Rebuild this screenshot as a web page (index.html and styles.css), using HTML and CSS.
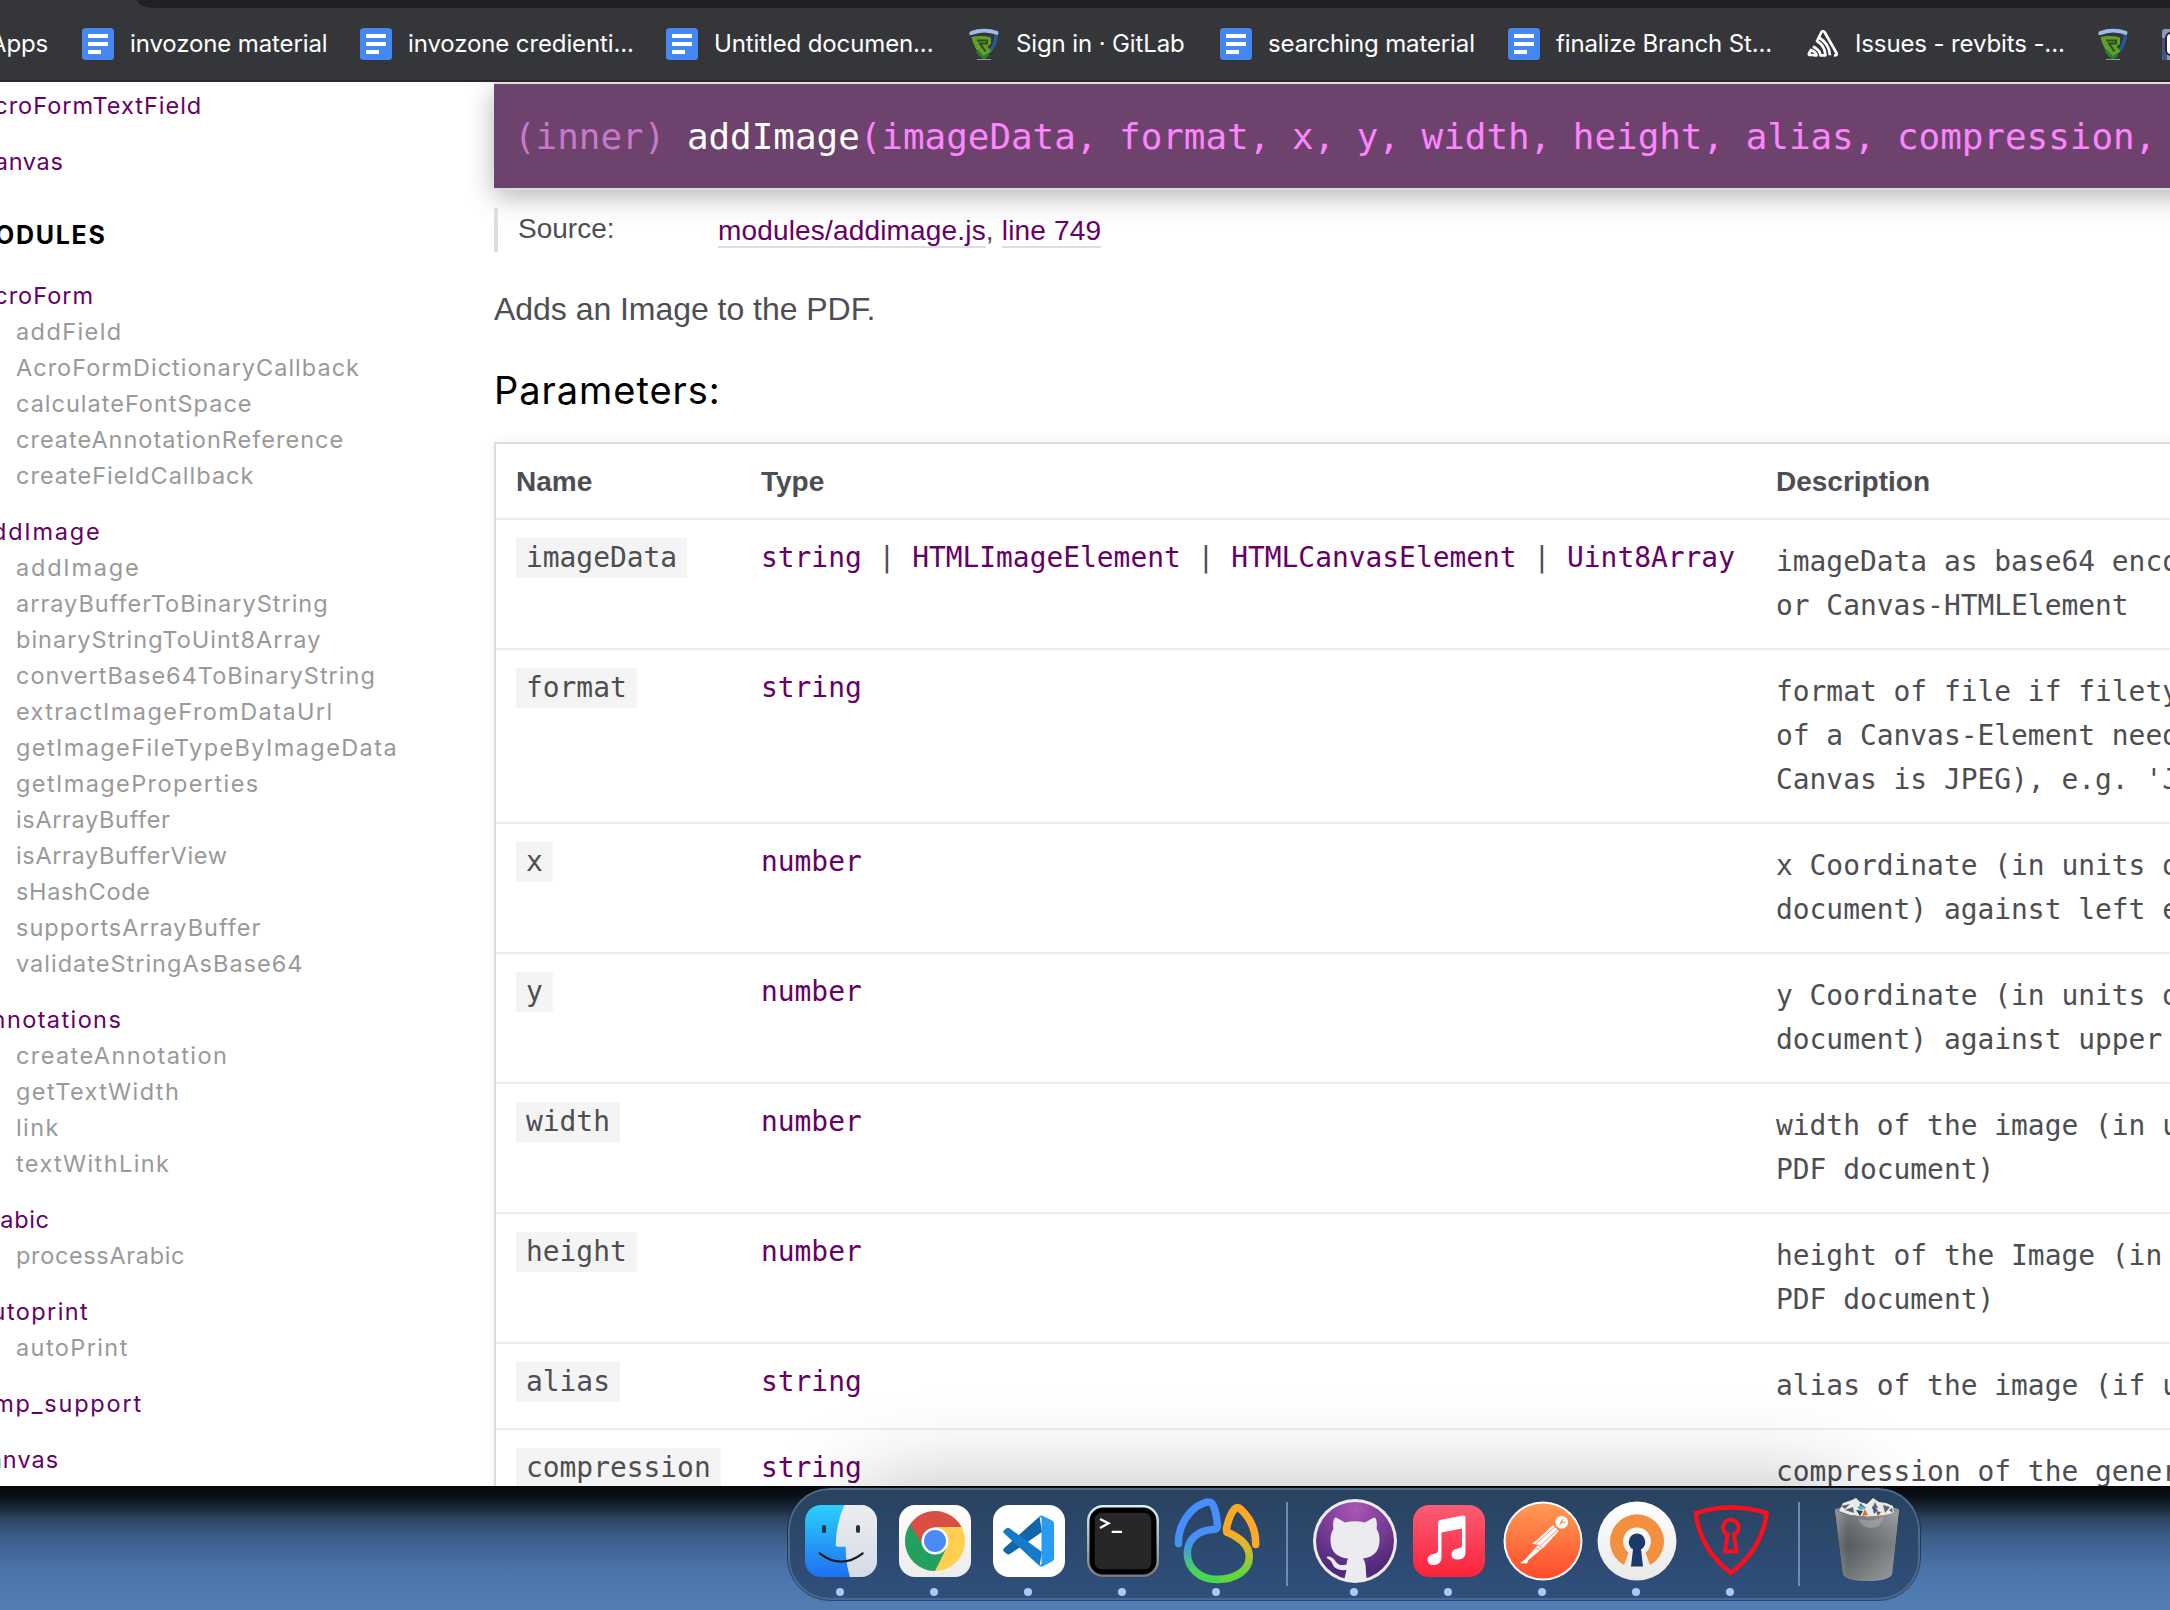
FILE: index.html
```html
<!DOCTYPE html>
<html lang="en">
<head>
<meta charset="utf-8">
<title>jsPDF - addImage</title>
<link rel="stylesheet" href="styles.css">
</head>
<body>
<svg class="defs" width="0" height="0" aria-hidden="true">
  <defs>
    <symbol id="doc" viewBox="0 0 32 32"><rect width="32" height="32" rx="3.5" fill="#4688f1"/><path d="M6 6h20v4H6zM6 14h20v4H6zM6 22h13v4H6z" fill="#fff"/></symbol>
    <symbol id="rev" viewBox="0 0 32 32"><path d="M1.5 3.500Q16-1.500 30.500 3.500Q30 20 19 28L16 30Q3 22 1.500 3.500z" fill="#33363b"/><path d="M28.500 5Q28 18 20.500 24" fill="none" stroke="#265a9a" stroke-width="3.500"/><path d="M1.500 7Q1 4 2.500 3.200Q16-1.500 30 3.200Q31 5 29.500 7Q16 2 3.500 7z" fill="#9dbce8"/><path d="M3.500 9Q14 7 23 9.500V16L19.500 18.500L23.500 23L16 30Q6 22 3.500 9z" fill="#62a024"/><path d="M9 12.500H19V15.500H12L17.500 23.500" fill="none" stroke="#2d4a22" stroke-width="2"/><path d="M9 23Q12 27 16 30L20 26.500" fill="none" stroke="#2c7a35" stroke-width="3"/><path d="M9 31.500h14" stroke="#9a9a9a" stroke-width="1"/></symbol>
  </defs>
</svg>

<div class="window">
  <div class="toolbar"></div>
  <nav class="bookmarks">
    <span class="apps">Apps</span>
    <a><svg><use href="#doc"/></svg><span>invozone material</span></a>
    <a><svg><use href="#doc"/></svg><span>invozone credienti...</span></a>
    <a><svg><use href="#doc"/></svg><span>Untitled documen...</span></a>
    <a><svg><use href="#rev"/></svg><span>Sign in · GitLab</span></a>
    <a><svg><use href="#doc"/></svg><span>searching material</span></a>
    <a><svg><use href="#doc"/></svg><span>finalize Branch St...</span></a>
    <a><svg viewBox="0 0 32 32"><g fill="none" stroke="#fff" stroke-width="2.700" stroke-linejoin="round"><path d="M6.500 27H2.500Q1.500 26.500 2 25.500L4 22Q9 24 9.500 27.300H6.500M6 18.500Q13 22 13.500 27.300H18.500Q18 18 10 13L14.500 4Q16 2 17.500 4L29.500 25Q30.500 27 28.500 27.300H27M12 9.500Q22.500 16 23 27.300"/></g></svg><span>Issues - revbits -...</span></a>
    <a><svg><use href="#rev"/></svg></a>
    <a><svg viewBox="0 0 32 32"><rect x="1" y="1" width="31" height="31" rx="3" fill="#8e99b5"/><path d="M1 10h5v22H4Q1 31 1 28z" fill="#3f5488"/><rect x="5" y="5" width="30" height="22" rx="5" fill="#fff" stroke="#26262c" stroke-width="2"/></svg></a>
  </nav>

  <div class="page">
    <aside class="sidebar">
      <h4>AcroFormTextField</h4>
      <h4 class="tight">Canvas</h4>
      <h3>MODULES</h3>
      <h4>AcroForm</h4>
      <ul>
        <li class="wide">addField</li>
        <li>AcroFormDictionaryCallback</li>
        <li>calculateFontSpace</li>
        <li>createAnnotationReference</li>
        <li>createFieldCallback</li>
      </ul>
      <h4 class="wider">addImage</h4>
      <ul>
        <li class="wider">addImage</li>
        <li>arrayBufferToBinaryString</li>
        <li>binaryStringToUint8Array</li>
        <li>convertBase64ToBinaryString</li>
        <li class="wide">extractImageFromDataUrl</li>
        <li class="wide">getImageFileTypeByImageData</li>
        <li class="wide">getImageProperties</li>
        <li class="tight">isArrayBuffer</li>
        <li class="tight">isArrayBufferView</li>
        <li class="tight">sHashCode</li>
        <li>supportsArrayBuffer</li>
        <li>validateStringAsBase64</li>
      </ul>
      <h4 class="wide">annotations</h4>
      <ul>
        <li class="wide">createAnnotation</li>
        <li class="wide">getTextWidth</li>
        <li class="wide">link</li>
        <li class="wide">textWithLink</li>
      </ul>
      <h4 class="tight">arabic</h4>
      <ul><li class="tight">processArabic</li></ul>
      <h4 class="wide">autoprint</h4>
      <ul><li class="wide">autoPrint</li></ul>
      <h4 class="wider">bmp_support</h4>
      <h4>canvas</h4>
    </aside>

    <main class="content">
      <h2 class="signature"><span class="attr">(inner)</span> <b>addImage</b>(imageData, format, x, y, width, height, alias, compression, rotation)</h2>
      <dl class="details">
        <dt>Source:</dt>
        <dd><a>modules/addimage.js</a>, <a>line 749</a></dd>
      </dl>
      <p class="summary">Adds an Image to the PDF.</p>
      <h5>Parameters:</h5>
      <div class="params">
        <div class="row head"><div>Name</div><div>Type</div><div>Description</div></div>
        <div class="row"><div><code>imageData</code></div><div class="type"><a>string</a> | <a>HTMLImageElement</a> | <a>HTMLCanvasElement</a> | <a>Uint8Array</a></div><div class="desc">imageData as base64 encoded DataUrl<br>or Canvas-HTMLElement</div></div>
        <div class="row"><div><code>format</code></div><div class="type"><a>string</a></div><div class="desc">format of file if filetype-recognition<br>of a Canvas-Element needs to be set<br>Canvas is JPEG), e.g. 'JPEG', 'PNG'</div></div>
        <div class="row"><div><code>x</code></div><div class="type"><a>number</a></div><div class="desc">x Coordinate (in units declared<br>document) against left edge</div></div>
        <div class="row"><div><code>y</code></div><div class="type"><a>number</a></div><div class="desc">y Coordinate (in units declared<br>document) against upper edge</div></div>
        <div class="row"><div><code>width</code></div><div class="type"><a>number</a></div><div class="desc">width of the image (in units<br>PDF document)</div></div>
        <div class="row"><div><code>height</code></div><div class="type"><a>number</a></div><div class="desc">height of the Image (in units<br>PDF document)</div></div>
        <div class="row"><div><code>alias</code></div><div class="type"><a>string</a></div><div class="desc">alias of the image (if used</div></div>
        <div class="row"><div><code>compression</code></div><div class="type"><a>string</a></div><div class="desc">compression of the generated</div></div>
      </div>
    </main>
    <div class="dock-shadow"></div>
  </div>
</div>

<div class="desktop">
  <div class="dock">
    <div class="app"><svg viewBox="0 0 88 88">
      <defs><linearGradient id="fa" x2="0" y2="1"><stop stop-color="#2cd0fb"/><stop offset="1" stop-color="#1f6ff0"/></linearGradient><linearGradient id="fb" x2="0" y2="1"><stop stop-color="#ededf0"/><stop offset="1" stop-color="#d3dbe6"/></linearGradient><clipPath id="sq"><rect x="8" y="8" width="72" height="72" rx="16"/></clipPath></defs>
      <g clip-path="url(#sq)"><path d="M8 8h72v72H8z" fill="url(#fa)"/><path d="M47.500 8Q39 26 38.700 48Q38.700 49.700 40.500 49.700H48.700Q48.500 66 53 80H80V8z" fill="url(#fb)"/></g>
      <path d="M27 30v4M61 30v4" stroke="#26313d" stroke-width="4" stroke-linecap="round"/><path d="M22.700 56.300Q44 73 65.700 56.300" fill="none" stroke="#171b20" stroke-width="2.200" stroke-linecap="round"/></svg><i></i></div>
    <div class="app"><svg viewBox="0 0 88 88">
      <defs><linearGradient id="ch" x2="0" y2="1"><stop stop-color="#fff"/><stop offset="1" stop-color="#ececec"/></linearGradient></defs>
      <rect x="8" y="8" width="72" height="72" rx="16" fill="url(#ch)"/>
      <circle cx="44" cy="44" r="30" fill="#ffcf4d"/>
      <path d="M44 44L55 52L44 74A30 30 0 0 1 19 27.500z" fill="#239f60"/>
      <path d="M19 27.500A30 30 0 0 1 70.500 30H44L31.500 48z" fill="#da4f45"/>
      <circle cx="44" cy="44" r="13.500" fill="#fff"/><circle cx="44" cy="44" r="11" fill="#4c8bf5"/></svg><i></i></div>
    <div class="app"><svg viewBox="0 0 88 88">
      <rect x="8" y="8" width="72" height="72" rx="16" fill="#fff"/>
      <path d="M54.500 19.500L57 35L25 57Q23 58 21.500 56.800L18.800 54.300Q17.500 52.800 19 51.300z" fill="#0f66ab"/>
      <path d="M19 36.300Q17.500 34.800 18.800 33.500L21.500 31.200Q23 30.200 24.500 31.300L57 55L54.500 69z" fill="#167ac8"/>
      <path d="M54 19.500Q55.500 18 57.500 18.800L67 23.500Q69 24.500 69 26.500V61.500Q69 63.500 67 64.500L57.500 69.500Q55.500 70 54 68.500L56.500 67V21z" fill="#2a9cf0"/></svg><i></i></div>
    <div class="app"><svg viewBox="0 0 88 88">
      <defs><linearGradient id="te" x2="0" y2="1"><stop stop-color="#d9f3fa"/><stop offset="1" stop-color="#77757a"/></linearGradient></defs>
      <rect x="8" y="8" width="72" height="72" rx="16" fill="url(#te)"/><rect x="10.500" y="10.500" width="67" height="67" rx="13.500" fill="#000"/><rect x="15.700" y="15.700" width="56.600" height="56.500" rx="7" fill="#272727"/><path d="M21 22L29.500 26.300L21 31M32.700 34.800H43" stroke="#fff" stroke-width="2.300" fill="none"/></svg><i></i></div>
    <div class="app"><svg viewBox="0 0 88 88">
      <defs><linearGradient id="tp" x1="0" y1="30" x2="0" y2="83" gradientUnits="userSpaceOnUse"><stop stop-color="#478dfb"/><stop offset=".35" stop-color="#4396e6"/><stop offset=".85" stop-color="#48d850"/></linearGradient><linearGradient id="tq" x1="60" y1="30" x2="48" y2="83" gradientUnits="userSpaceOnUse"><stop stop-color="#fda826"/><stop offset=".25" stop-color="#e5b728"/><stop offset=".8" stop-color="#62d63b"/></linearGradient></defs>
      <g fill="none" stroke-width="7.500" stroke-linecap="round" stroke-linejoin="round"><path d="M54 35C67 41 76.300 48 76.300 60C76.300 73 63 82.500 44 82.500" stroke="url(#tq)"/><path d="M5.500 46.500C5 28 17 11 31 6Q38 3 40.500 9Q43.500 16 44.500 29Q44 32.500 40 32.500C25 33 14.300 43 14.300 56C14.300 71 27 82.500 44 82.500" stroke="url(#tp)"/><path d="M54 35Q53 33 54 29Q57 17 61.500 12Q64.500 9 68 12.500C77 21 83 33 82.700 47.500" stroke="#fda826"/></g></svg><i></i></div>
    <span class="sep"></span>
    <div class="app"><svg viewBox="0 0 88 88">
      <defs><radialGradient id="gh" cx=".5" cy=".1" r=".8"><stop stop-color="#ab55b6"/><stop offset="1" stop-color="#50287a"/></radialGradient><clipPath id="gc"><circle cx="44" cy="44" r="41"/></clipPath></defs>
      <circle cx="44" cy="44" r="42" fill="#ececf0"/><circle cx="44" cy="44" r="39" fill="url(#gh)"/>
      <g clip-path="url(#gc)" fill="#ececf0"><path d="M23 22Q24 19.500 26 21L34 25.500Q44 23 54 25.500L62 21Q64 19.500 65 22Q66.500 27 65.500 31.500Q69 37 68.500 44Q68 59.500 52 61.500Q54 64 54.500 68L56 88H32L35.500 73Q24 74 21.500 67Q20 63 16 61Q15 59 18 59.500Q22 60 25 65Q28 69.500 35.500 67.500Q35.500 64 37 61.500Q20 60 19.500 44Q19 37 22.500 31.500Q21.500 27 23 22z"/></g></svg><i></i></div>
    <div class="app"><svg viewBox="0 0 88 88">
      <defs><linearGradient id="mu" x2="0" y2="1"><stop stop-color="#fb5c74"/><stop offset="1" stop-color="#fa233b"/></linearGradient></defs>
      <rect x="8" y="8" width="72" height="72" rx="16" fill="url(#mu)"/>
      <path d="M33 25.500Q33 23.500 35 23L58 18.500Q60.500 18.200 60.500 20.500V56Q60 62 53.500 62.500Q46.500 63 46.500 57.500Q46.500 52.500 53 51.500Q57 51 57 48V31.500L36.500 35.500V61Q36 67.500 29 68Q22.500 68 22.500 62.500Q23 57.500 28.500 57Q33 56.500 33 53z" fill="#fff"/></svg><i></i></div>
    <div class="app"><svg viewBox="0 0 88 88">
      <defs><linearGradient id="po" x2="0" y2="1"><stop stop-color="#ff9b55"/><stop offset="1" stop-color="#ff4b2b"/></linearGradient></defs>
      <circle cx="44" cy="44" r="39.500" fill="#fff"/><circle cx="44" cy="44" r="37.500" fill="url(#po)"/>
      <circle cx="62.700" cy="25.300" r="6.300" fill="#fff"/><path d="M61 27.500L64 22M61 26L66.500 25" stroke="#ff8248" stroke-width="1.200"/>
      <path d="M54 28L60 34L45 50L29.500 63L28 66.500L21 66L26 62.500L39 48L33 46.500L38 43z" fill="#fff"/><path d="M36.500 47L56 30M41 49L59 32.500M38 47L43 51M37 51L42 54" stroke="#ff7443" stroke-width=".8"/></svg><i></i></div>
    <div class="app"><svg viewBox="0 0 88 88">
      <defs><linearGradient id="ov" x2="0" y2="1"><stop stop-color="#fff"/><stop offset="1" stop-color="#e9e9ea"/></linearGradient></defs>
      <circle cx="44" cy="44" r="39.500" fill="url(#ov)"/>
      <path d="M31 68A27 27 0 1 1 57 68L52.500 55.500A14 14 0 1 0 35.500 55.500z" fill="#f3903f"/>
      <path d="M44 36.500A8.500 8.500 0 0 1 48 52.300L50 69.500H38L40 52.300A8.500 8.500 0 0 1 44 36.500z" fill="#1b3a6b"/></svg><i></i></div>
    <div class="app"><svg viewBox="0 0 88 88">
      <g fill="none" stroke="#fb0f1c" stroke-width="4.500"><path d="M8.800 16.200Q44 5 79.600 16.200Q75 52 44 76Q13 52 8.800 16.200z"/><path d="M40.500 37.500A7.700 7.700 0 1 1 47 37.500L49.500 54.500H38z" stroke-width="4"/></g></svg><i></i></div>
    <span class="sep narrow"></span>
    <div class="app"><svg viewBox="0 0 88 88">
      <defs><linearGradient id="tr"><stop stop-color="#85898b"/><stop offset=".2" stop-color="#5f6466"/><stop offset=".6" stop-color="#767a7b"/><stop offset="1" stop-color="#8d9294"/></linearGradient><linearGradient id="ts" x2="0" y2="1"><stop stop-color="#fff" stop-opacity=".18"/><stop offset=".5" stop-color="#222" stop-opacity=".12"/><stop offset="1" stop-color="#fff" stop-opacity=".15"/></linearGradient></defs>
      <path d="M12 12Q44 2 76 12L69 77Q66 84 44 84Q23 84 20 77z" fill="url(#tr)"/>
      <path d="M16 14L20 6L29 3L33 1L37 5L44 7L50 1L56 5L63 6L70 9L71 16L60 19L44 20L27 18z" fill="#e9eaeb"/>
      <path d="M18 9l9-2-5 5zM22 13l8-3 1 6zM37 6l6 5-7 1zM52 5l3 6-6 1zM60 8l7 2-5 6zM66 13l3-2 1 5z" fill="#606468"/><path d="M34 10l6-1 2 3-5 1z" fill="#35c4c0"/><path d="M33 13l7 1-3 5z" fill="#3b3d42"/><path d="M49 9l6 4-4 4z" fill="#3e5da0"/><path d="M42 12l3 6-6 1z" fill="#d4743d"/><path d="M53 14l5 1-3 4z" fill="#a2482c"/>
      <path d="M12 12Q14 18 44 19.500Q74 18 76 12L69 77Q66 84 44 84Q23 84 20 77z" fill="url(#tr)"/><path d="M12 12Q14 18 44 19.500Q74 18 76 12L69 77Q66 84 44 84Q23 84 20 77z" fill="url(#ts)"/>
      <path d="M35 22Q42 35 56 29L61 20Q50 25 35 22z" fill="#b1b4b5" opacity=".5"/></svg></div>
  </div>
</div>
</body>
</html>
```

FILE: styles.css
```css
* { box-sizing: border-box; }
body {
  margin: 0;
  width: 2170px;
  height: 1610px;
  overflow: hidden;
  background: #517db3;
  font-family: "Liberation Sans", Arial, sans-serif;
  color: #4d4e53;
}
h2, h3, h4, h5, p, ul, dl, dd { margin: 0; padding: 0; font-weight: 400; }
.defs { position: absolute; }
.window { height: 1486px; overflow: hidden; background: linear-gradient(#35363a 60px, #fff 60px); }

/* browser chrome */
.toolbar {
  height: 8px;
  margin-left: 137px;
  background: #202124;
  border-bottom-left-radius: 22px 10px;
}
.bookmarks {
  display: grid;
  grid-template-columns: 82px 278px 306px 302px 252px 288px 299px 290px 64px 40px;
  align-items: center;
  height: 74px;
  overflow: hidden;
  background: #35363a;
  border-bottom: 2px solid #292827;
  color: #fff;
  font: 24px/34px Inter, sans-serif;
  letter-spacing: -.12px;
  white-space: nowrap;
}
.bookmarks .apps { margin-left: -10px; }
.bookmarks a { display: flex; align-items: center; gap: 16px; height: 32px; }
.bookmarks svg { width: 32px; height: 32px; flex: none; }

.page { position: relative; display: flex; height: 1404px; overflow: hidden; background: #fff; }

/* sidebar */
.sidebar {
  flex: none;
  width: 494px;
  padding-top: 6px;
  font: 23.5px/36px Inter, sans-serif;
  letter-spacing: 1px;
  white-space: nowrap;
}
.sidebar h4 { font-size: 23.5px; line-height: 36px; margin: 0 0 20px -23px; color: #606; }
.sidebar h4:has(+ ul) { margin-bottom: 0; }
.sidebar h4:last-child { margin-left: -26px; }
.sidebar .tight { letter-spacing: .65px; }
.sidebar .wide { letter-spacing: 1.4px; }
.sidebar .wider { letter-spacing: 1.8px; }
.sidebar h3 {
  margin: 37px 0 25px -30px;
  color: #000;
  font-size: 25px;
  font-weight: 700;
  line-height: 36px;
  letter-spacing: 1.7px;
}
.sidebar ul { list-style: none; padding-left: 16px; margin-bottom: 20px; color: #999; }

/* documentation */
.content { flex: none; width: 1900px; }
.signature {
  height: 106px;
  border-top: 2px solid #ddd;
  background: #6d426d;
  box-shadow: 0 2px #ddd, 0 8px 26px rgba(0, 0, 0, .3);
  padding-left: 20px;
  color: #ff85ff;
  font: 35.9px/106px "DejaVu Sans Mono", monospace;
  white-space: nowrap;
}
.signature .attr { color: #c878c8; }
.signature b { color: #fff; font-weight: 400; }
.details {
  display: flex;
  height: 44px;
  margin-top: 20px;
  padding-left: 20px;
  border-left: 4px solid #ddd;
  font-size: 28px;
}
.details dt { width: 200px; line-height: 42px; }
.details dd { line-height: 46px; letter-spacing: .17px; white-space: nowrap; }
.details a { color: #606; border-bottom: 2px solid #ddd; }
.summary { margin-top: 38px; font-size: 32px; line-height: 38px; letter-spacing: -.04px; }
.content h5 { margin-top: 34px; color: #000; font: 38px/56px Inter, sans-serif; letter-spacing: .95px; }
.params {
  margin-top: 24px;
  border: 2px solid #ddd;
  border-right: 0;
  box-shadow: 0 0 12px rgba(0, 0, 0, .06);
  font: 27.9px/36px "DejaVu Sans Mono", monospace;
  white-space: nowrap;
}
.row { display: grid; grid-template-columns: 245px 1015px 1fr; padding: 20px 0 20px 20px; border-bottom: 2px solid #eee; }
.row.head { height: 76px; font: 700 28px/36px "Liberation Sans", Arial, sans-serif; }
.row code { display: inline-block; margin: -2px 0; padding: 2px 10px; background: #f4f4f4; font: inherit; }
.row a { color: #606; }
.row .desc { line-height: 44px; }

/* desktop and dock */
.dock-shadow {
  position: absolute;
  left: 860px;
  right: 322px;
  top: 1412px;
  height: 110px;
  border-radius: 40px;
  box-shadow: 0 0 90px 10px rgba(0, 0, 0, .25);
}
.desktop {
  display: flex;
  align-items: flex-start;
  height: 124px;
  padding: 2px 0 0 788px;
  background: linear-gradient(#05070b 0, #0b1017 10px, #1b2838 22px, #2e4765 34px, #3b5a83 48px, #43689a 66px, #4b75aa 86px, #517db3 120px);
}
.dock {
  display: flex;
  width: 1132px;
  height: 112px;
  border: 2px solid #4d6888;
  border-radius: 42px;
  outline: 1px solid rgba(10, 25, 50, .55);
  padding: 0 4px;
  background: linear-gradient(#29425f, #2f4f7c);
}
.app { display: flex; flex-direction: column; align-items: center; width: 94px; padding-top: 7px; }
.app svg { width: 88px; height: 88px; flex: none; }
.app i { width: 8px; height: 8px; margin: 3px 2px 0 0; border-radius: 50%; background: #a9c9f7; }
.sep { width: 44px; padding: 12px 0 0 22px; }
.sep.narrow { width: 42px; padding-left: 20px; }
.sep::before { content: ""; display: block; width: 2px; height: 84px; background: #6c8ab2; }
```
